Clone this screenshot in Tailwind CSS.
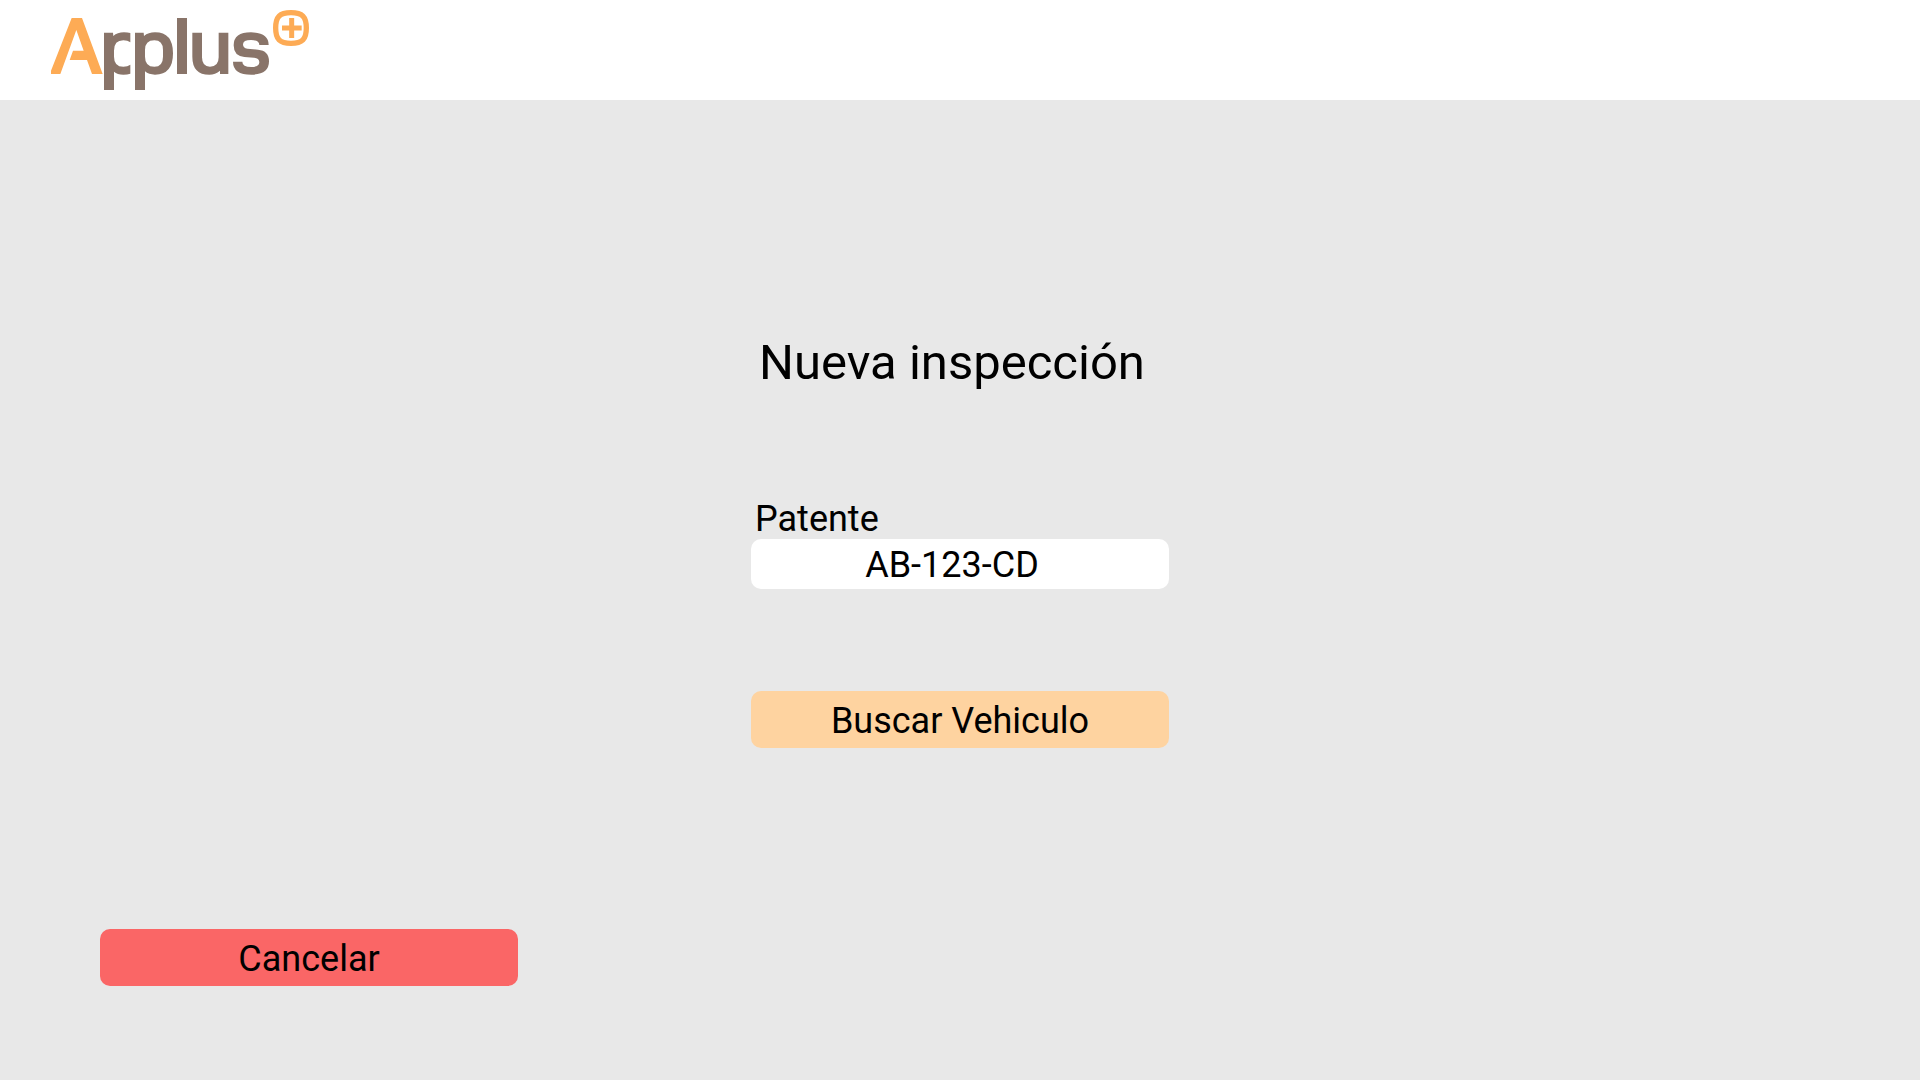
<!DOCTYPE html>
<html lang="es">
<head>
<meta charset="utf-8">
<meta name="viewport" content="width=device-width, initial-scale=1">
<title>Applus - Nueva inspección</title>
<script src="https://cdn.jsdelivr.net/npm/@tailwindcss/browser@4"></script>
</head>
<body class="flex min-h-screen flex-col bg-[#e8e8e8] font-[Roboto,sans-serif] text-black">
<header class="flex h-[100px] items-center bg-white px-[50px]">
  <svg class="h-[84px] w-[260px]" viewBox="30 24 780 252" role="img" aria-label="Applus+">
    <path fill="#fdab55" d="M33 222V212L95 54H126L188 222H156L141 180H89L99 152H131L109 90L61 222Z"/>
    <g fill="#897469">
      <path d="M192 98H219L220 108Q232 97 252 97Q263 97 271 99V127Q263 121 250 121Q222 121 222 152V170Q222 200 250 200Q263 200 271 194V221Q262 224 250 224Q232 224 222 215V270H192Z"/>
      <path fill-rule="evenodd" d="M285 98H311L312 108Q325 97 345 97Q399 97 399 160Q399 224 345 224Q326 224 315 214V270H285ZM343 121Q315 121 315 150V170Q315 200 343 200Q369 200 369 170V150Q369 121 343 121Z"/>
      <path d="M411 54H441V222H411Z"/>
      <path d="M457 98H486V172Q486 200 510 200Q536 200 536 172V98H565V222H540V212Q526 224 508 224Q457 224 457 170Z"/>
      <path d="M686 135H658Q658 120 633 120Q609 120 609 133Q609 145 622 146L654 149Q687 152 687 184Q687 224 634 224Q579 224 579 185H607Q607 201 634 201Q658 201 658 187Q658 174 642 173L613 171Q581 168 581 136Q581 97 633 97Q686 97 686 135Z"/>
    </g>
    <path fill="none" stroke="#fdab55" stroke-width="16" d="M753 38C787 38 799 50 799 84C799 118 787 130 753 130C719 130 707 118 707 84C707 50 719 38 753 38Z"/>
    <path fill="none" stroke="#fdab55" stroke-width="15" d="M726 84H785M755 54V114"/>
  </svg>
</header>
<main class="flex flex-1 flex-col px-[100px] pt-[233px] pb-[94px]">
  <form class="mx-auto flex w-full max-w-[418px] flex-col">
    <h1 class="pr-4 text-center text-[49px] leading-[60px] whitespace-nowrap">Nueva inspección</h1>
    <label for="patente" class="mt-[106px] pl-1 text-[36px] leading-[40px]">Patente</label>
    <input id="patente" type="text" value="AB-123-CD" class="h-[50px] w-full rounded-[10px] bg-white pt-[2px] pr-4 text-center text-[36px]">
    <button type="submit" class="mt-[102px] h-[57px] rounded-[10px] bg-[#fed3a0] pt-[2px] text-[36px]">Buscar Vehiculo</button>
  </form>
  <button type="button" class="mt-auto h-[57px] w-full max-w-[418px] rounded-[10px] bg-[#fa6666] pt-[2px] text-[36px]">Cancelar</button>
</main>
</body>
</html>
